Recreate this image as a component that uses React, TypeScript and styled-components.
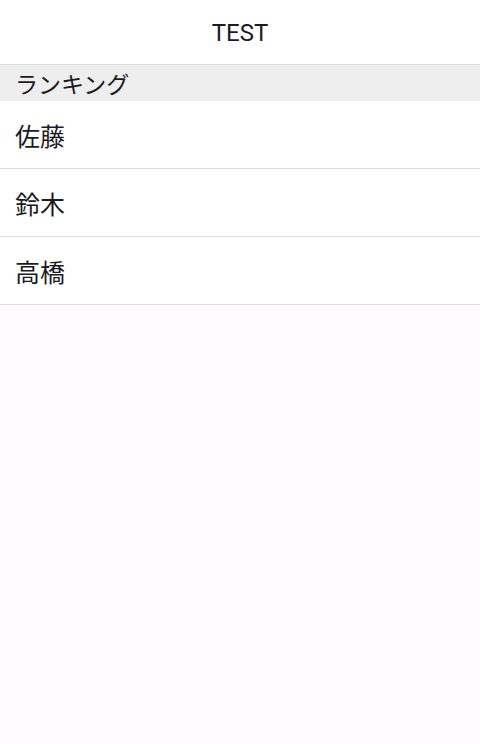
import React from 'react';
import styled, { createGlobalStyle } from 'styled-components';

const GlobalStyle = createGlobalStyle`
  html, body {
    margin: 0;
    padding: 0;
    height: 100%;
  }
  body {
    font-family: Roboto, "Noto Sans CJK JP", sans-serif;
    color: #1c1b1f;
    background: #fffbfe;
  }
  #root {
    min-height: 100%;
  }
`;

const names = ['佐藤', '鈴木', '高橋'];

export default function App() {
  return (
    <>
      <GlobalStyle />
      <Screen>
        <Header>
          <Title>TEST</Title>
        </Header>
        <SectionHeader>ランキング</SectionHeader>
        <List>
          {names.map((name) => (
            <Row key={name}>{name}</Row>
          ))}
        </List>
      </Screen>
    </>
  );
}

const Screen = styled.div`
  display: flex;
  flex-direction: column;
  min-height: 744px;
  background: #fffbfe;
`;

const Header = styled.header`
  height: 64px;
  display: flex;
  align-items: center;
  justify-content: center;
  background: #ffffff;
  border-bottom: 1px solid #dddddd;
`;

const Title = styled.h1`
  all: unset;
  font-size: 24px;
  font-weight: 400;
  line-height: 1;
  margin-top: 2px;
`;

const SectionHeader = styled.div`
  height: 36px;
  display: flex;
  align-items: center;
  padding: 0 15px;
  background: #eeeeee;
  font-size: 23px;
`;

const List = styled.div`
  display: flex;
  flex-direction: column;
`;

const Row = styled.div`
  height: 67px;
  display: flex;
  align-items: center;
  padding: 0 15px;
  background: #ffffff;
  border-bottom: 1px solid #dddddd;
  font-size: 25px;
`;
